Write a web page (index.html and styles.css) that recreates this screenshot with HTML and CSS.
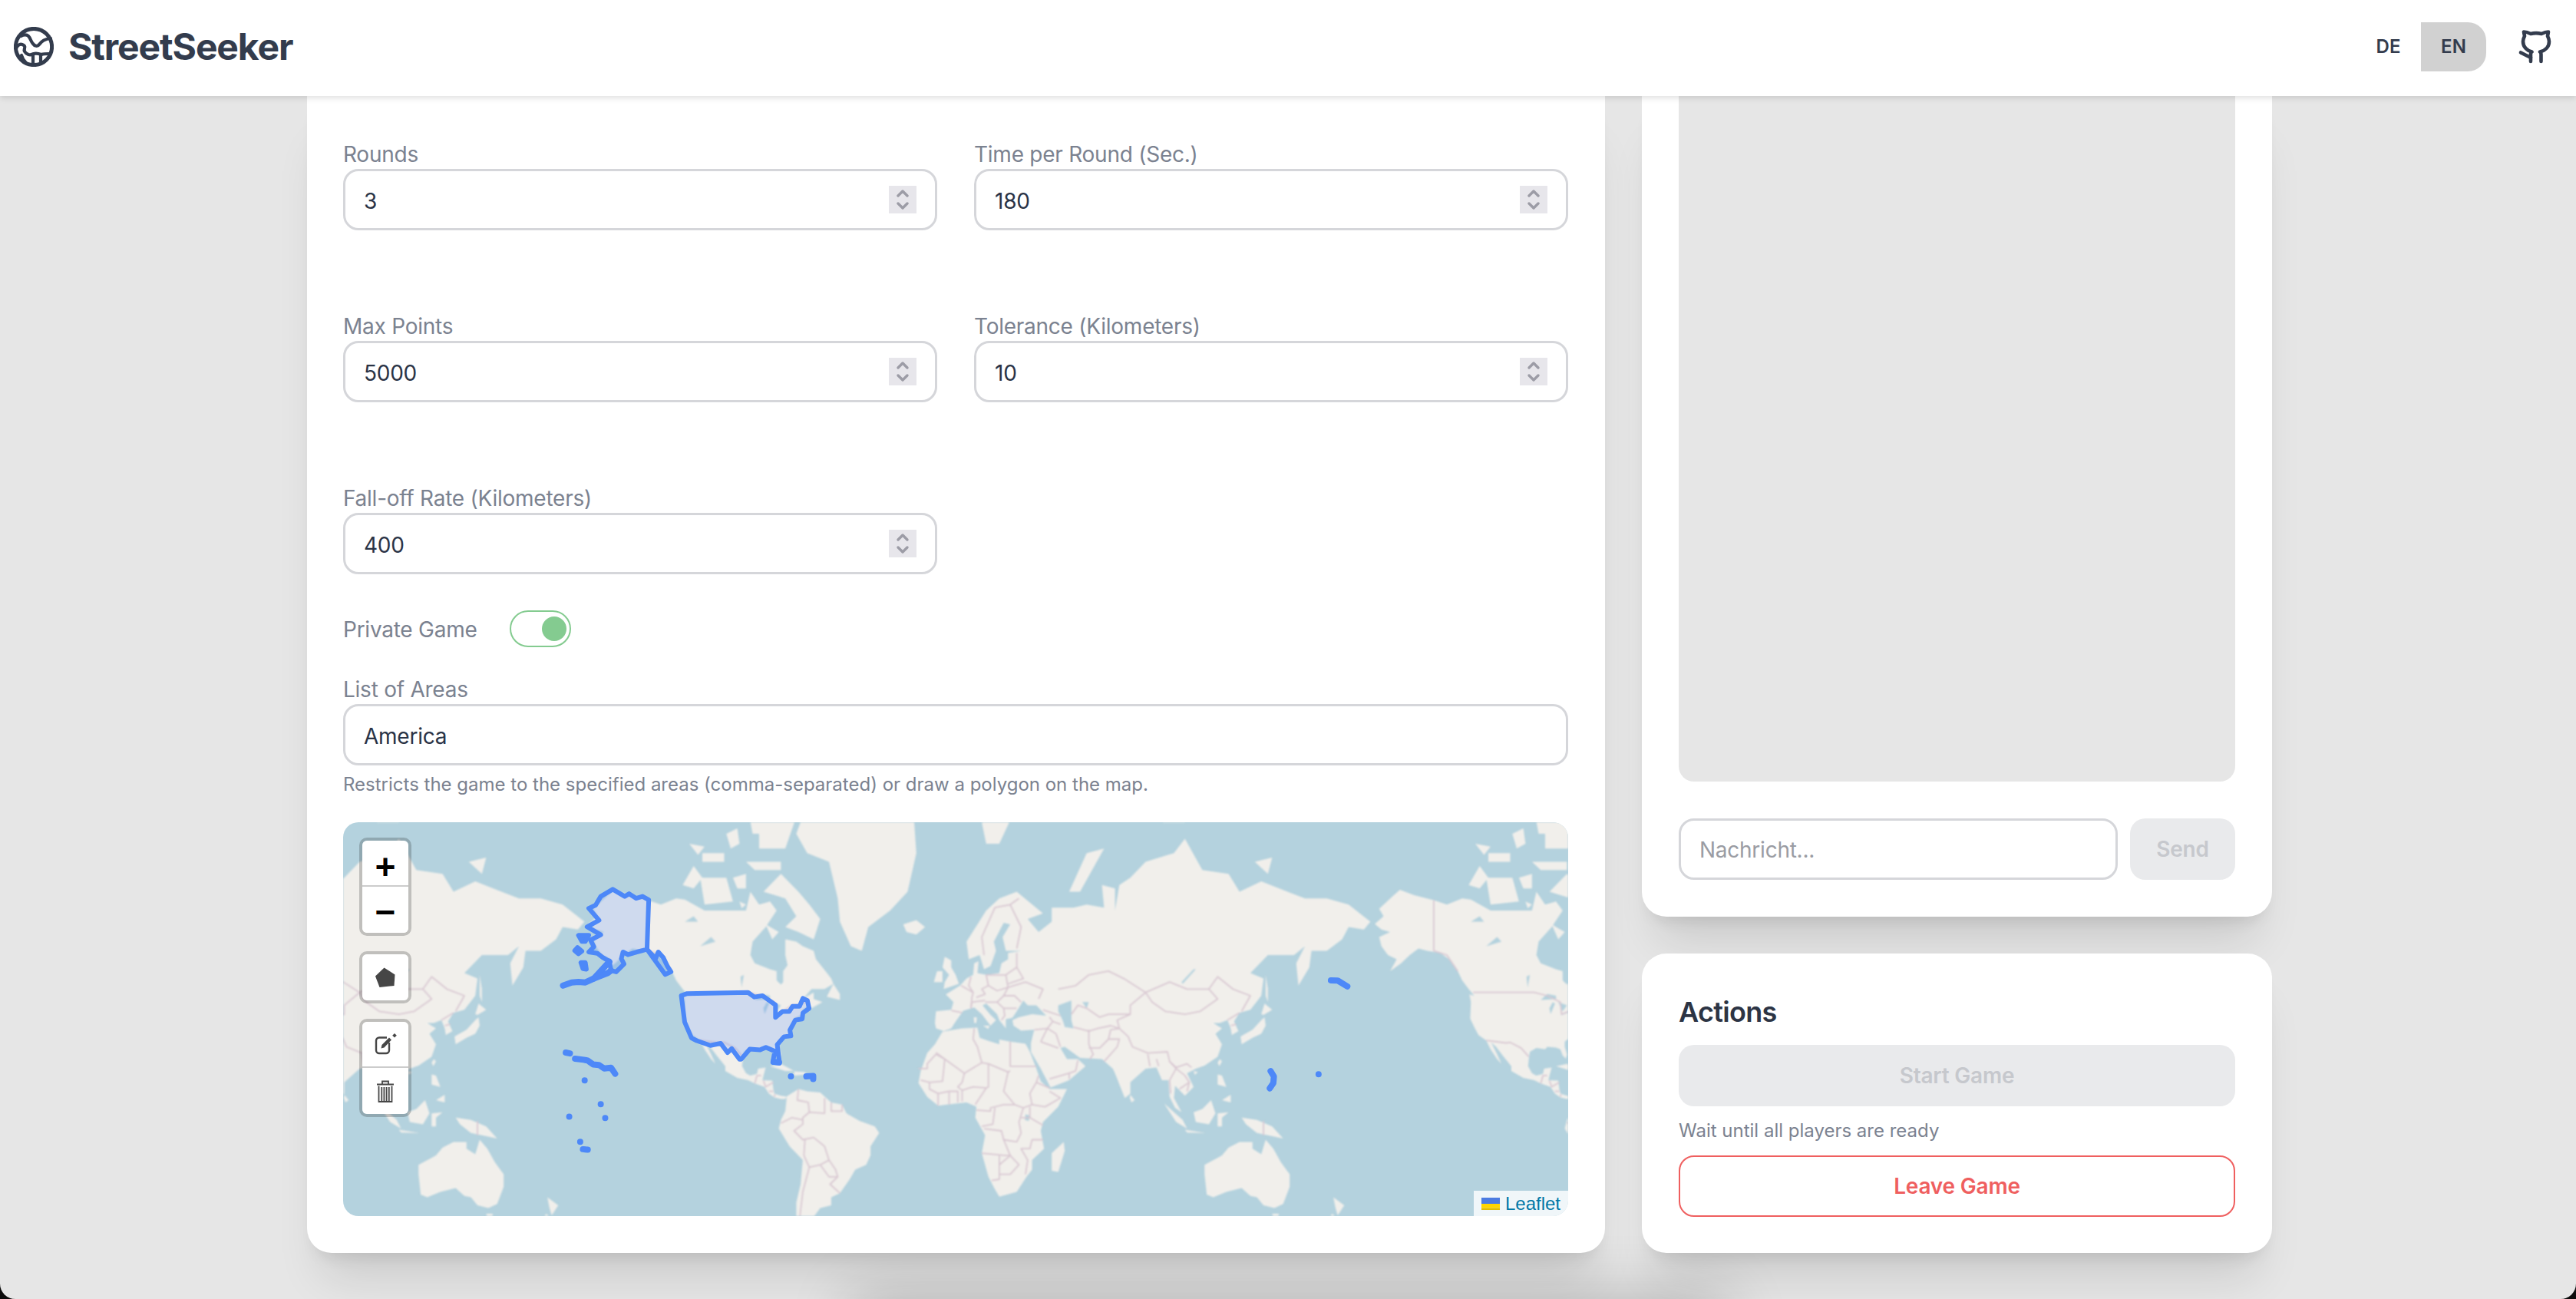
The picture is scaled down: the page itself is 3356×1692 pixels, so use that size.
FILE: index.html
```html
<!DOCTYPE html>
<html lang="en">
<head>
    <meta charset="UTF-8">
    <meta name="viewport" content="width=device-width, initial-scale=1.0">
    <title>StreetSeeker</title>
    <link rel="stylesheet" href="styles.css">
</head>
<body>
    <div class="window">
        <div class="bottom-glow"></div>

        <header class="topbar">
            <a class="brand" href="#">
                <svg class="brand-icon" viewBox="0 0 52 52" fill="none" stroke="currentColor" stroke-width="4.200" stroke-linecap="round" stroke-linejoin="round">
                    <circle cx="26" cy="26" r="23.600" stroke-width="5"/>
                    <path d="M9 12c4-2 8-2 10 0 3 3 3 7 6 10 2 3 6 4 8 1 2-3 6-7 15-8"/>
                    <path d="M3 28c2-4 5-6 8-5 3 1 4 3 3 5-1 3 0 6 5 8 3 1 5 0 7-1 3-1 7 0 10 1 3-1 6-1 11-1"/>
                    <path d="M25 48V36M35 48V37M10 37c1 4 3 7 6 10"/>
                </svg>
                <span class="brand-name">StreetSeeker</span>
            </a>
            <div class="topbar-right">
                <div class="lang-switch">
                    <button class="lang-btn">DE</button>
                    <button class="lang-btn lang-active">EN</button>
                </div>
                <a class="github-link" href="#">
                    <svg viewBox="0 0 40 43" fill="none" stroke="currentColor" stroke-width="4.600" stroke-linecap="round" stroke-linejoin="round">
                        <path d="M15 41V32c0-2 .5-3 1.500-3.500C10 27 5 22 5 15c0-3 1-5 2-7L6 2.500c3 0 6 1 9 2.500 4-1 10-1 14 0 3-1.500 6-2.500 9-2.500L37 8c1 2 2 4 2 7 0 7-5 12-12 13.500 1 .5 1.500 1.500 1.500 3.500V41"/>
                        <path d="M2 29.500L15 36"/>
                    </svg>
                </a>
            </div>
        </header>

        <main class="content">
            <section class="card settings-card">
                <div class="number-grid">
                    <div class="field">
                        <label class="field-label">Rounds</label>
                        <div class="input-box">
                            <input class="text-input" type="text" value="3">
                            <span class="spinner"><svg viewBox="0 0 36 36" fill="none" stroke="#9c9ca6" stroke-width="3.400" stroke-linecap="round" stroke-linejoin="round"><path d="M12 13l6-6 6 6M12 23l6 6 6-6"/></svg></span>
                        </div>
                    </div>
                    <div class="field">
                        <label class="field-label">Time per Round (Sec.)</label>
                        <div class="input-box">
                            <input class="text-input" type="text" value="180">
                            <span class="spinner"><svg viewBox="0 0 36 36" fill="none" stroke="#9c9ca6" stroke-width="3.400" stroke-linecap="round" stroke-linejoin="round"><path d="M12 13l6-6 6 6M12 23l6 6 6-6"/></svg></span>
                        </div>
                    </div>
                    <div class="field">
                        <label class="field-label">Max Points</label>
                        <div class="input-box">
                            <input class="text-input" type="text" value="5000">
                            <span class="spinner"><svg viewBox="0 0 36 36" fill="none" stroke="#9c9ca6" stroke-width="3.400" stroke-linecap="round" stroke-linejoin="round"><path d="M12 13l6-6 6 6M12 23l6 6 6-6"/></svg></span>
                        </div>
                    </div>
                    <div class="field">
                        <label class="field-label">Tolerance (Kilometers)</label>
                        <div class="input-box">
                            <input class="text-input" type="text" value="10">
                            <span class="spinner"><svg viewBox="0 0 36 36" fill="none" stroke="#9c9ca6" stroke-width="3.400" stroke-linecap="round" stroke-linejoin="round"><path d="M12 13l6-6 6 6M12 23l6 6 6-6"/></svg></span>
                        </div>
                    </div>
                    <div class="field">
                        <label class="field-label">Fall-off Rate (Kilometers)</label>
                        <div class="input-box">
                            <input class="text-input" type="text" value="400">
                            <span class="spinner"><svg viewBox="0 0 36 36" fill="none" stroke="#9c9ca6" stroke-width="3.400" stroke-linecap="round" stroke-linejoin="round"><path d="M12 13l6-6 6 6M12 23l6 6 6-6"/></svg></span>
                        </div>
                    </div>
                </div>

                <div class="toggle-row">
                    <span class="field-label">Private Game</span>
                    <span class="toggle"><span class="toggle-knob"></span></span>
                </div>

                <div class="field areas-field">
                    <label class="field-label">List of Areas</label>
                    <div class="input-box">
                        <input class="text-input" type="text" value="America">
                    </div>
                    <p class="help-text">Restricts the game to the specified areas (comma-separated) or draw a polygon on the map.</p>
                </div>

                <div class="map">
                    <svg id="mapLayer" class="map-tiles" viewBox="0 0 1596 513"></svg>

                    <svg class="map-overlay" viewBox="0 0 1596 513">
                        <g transform="translate(-17 -12) scale(.4464 .3448)">
                            <path class="area" d="M825 288L860 315 873 305 893 322 912 315 930 328 925 515 895 525 870 535 855 525 850 550 858 570 835 600 820 595 815 560 795 545 780 530 755 525 770 505 760 480 790 460 770 445 750 430 785 405 755 360 775 348 790 315Z"/>
                            <path class="area" d="M925 515L950 550 958 525 972 545 985 580 995 600 978 610 950 560Z"/>
                            <path class="area" d="M1025 690L1042 682 1220 678 1238 695 1262 690 1300 725 1300 772 1320 750 1340 750 1350 730 1370 730 1380 700 1393 708 1398 738 1380 755 1378 778 1358 782 1342 820 1345 842 1325 845 1305 875 1312 945 1292 942 1298 900 1272 885 1255 895 1225 892 1200 930 1195 930 1172 890 1160 905 1140 870 1110 878 1070 860 1055 850 1035 790Z"/>
                            <path class="area-line" d="M815 562L770 625 745 640 725 638 705 640 680 652"/>
                            <path class="area-line" d="M770 625L810 605 820 595"/>
                            <path class="area-solid" d="M725 462L755 462 745 485 735 485Z"/>
                            <path class="area-solid" d="M722 508L735 522 725 532 714 520Z"/>
                            <path class="area-solid" d="M732 565L745 565 748 590 738 588Z"/>
                            <path class="area-line" d="M688 905L700 908M715 928L740 932 752 935 768 950 785 952 800 965 820 962 832 985"/>
                            <path class="area-line" d="M743 1010v.1M790 1100v.1M698 1147v.1M803 1152v.1M730 1242v.1M738 1270L752 1272M1345 995v.1M1390 995L1410 993 1410 1005"/>
                            <path class="area-line" d="M1295 940L1310 942"/>
                        </g>
                        <g transform="translate(1053 -12) scale(.3571 .3448)">
                            <path class="area-line" d="M655 632L680 633 715 655M435 975L447 995 445 1020 432 1040M610 987v.1"/>
                        </g>
                    </svg>

                    <div class="map-controls">
                        <div class="map-control">
                            <a class="map-btn map-zoom">+</a>
                            <a class="map-btn map-zoom">−</a>
                        </div>
                        <div class="map-control">
                            <a class="map-btn">
                                <svg class="map-icon" viewBox="0 0 30 30"><path fill="#464646" d="M13.500 2.500L27.500 11.500 26.500 26 7.500 28 2 13.500Z"/></svg>
                            </a>
                        </div>
                        <div class="map-control">
                            <a class="map-btn">
                                <svg class="map-icon" viewBox="0 0 30 30" fill="none" stroke="#464646" stroke-width="2.400">
                                    <path d="M17 6.500H7a4 4 0 0 0-4 4V23a4 4 0 0 0 4 4h9a4 4 0 0 0 4-4V13"/>
                                    <path d="M9.500 20.500l1-4.500L20 6.500l3 3-9.500 10z" fill="#464646" stroke="none"/>
                                    <path d="M27 1l2.800 2.800L27 6.600 24.200 3.800z" fill="#464646" stroke="none"/>
                                </svg>
                            </a>
                            <a class="map-btn">
                                <svg class="map-icon" viewBox="0 0 30 30" fill="none" stroke="#464646" stroke-width="1.800">
                                    <path d="M11 6V2.500h8V6M4 6.500h22M6.500 8.500V29h17V8.500M10.300 10v18M13.400 10v18M16.600 10v18M19.800 10v18"/>
                                </svg>
                            </a>
                        </div>
                    </div>

                    <div class="map-credit">
                        <svg class="flag" viewBox="0 0 24 16"><rect width="24" height="8" fill="#4c7be1"/><rect y="8" width="24" height="5.500" fill="#ffd500"/><rect y="13.500" width="24" height="2.500" fill="#e0bc00"/></svg>
                        <a class="credit-link" href="#">Leaflet</a>
                    </div>
                </div>
            </section>

            <div class="side-column">
                <section class="card chat-card">
                    <div class="chat-box"></div>
                    <div class="chat-form">
                        <input class="chat-input" type="text" placeholder="Nachricht...">
                        <button class="btn btn-disabled send-btn">Send</button>
                    </div>
                </section>
                <section class="card actions-card">
                    <h2 class="actions-title">Actions</h2>
                    <button class="btn btn-disabled">Start Game</button>
                    <p class="hint">Wait until all players are ready</p>
                    <button class="btn btn-danger">Leave Game</button>
                </section>
            </div>
        </main>
    </div>

    <script src="map.js"></script>
</body>
</html>
```

FILE: styles.css
```css
* {
    box-sizing: border-box;
}
html, body {
    margin: 0;
    background-color: #0c0c0c;
}
body {
    font-family: Inter, "Noto Sans", sans-serif;
    color: #333c4d;
}
.window {
    position: relative;
    display: flex;
    flex-direction: column;
    height: 1692px;
    overflow: hidden;
    background-color: #e6e6e6;
    border-radius: 0 0 20px 20px;
}
.bottom-glow {
    position: absolute;
    left: 1130px;
    top: 1710px;
    width: 1100px;
    height: 80px;
    box-shadow: 0 0 80px 20px rgba(0, 0, 0, 0.22);
}

/* top bar */
.topbar {
    position: relative;
    z-index: 10;
    display: flex;
    justify-content: space-between;
    align-items: center;
    flex: none;
    height: 125px;
    padding: 0 34px 4px 18px;
    background-color: #FFF;
    box-shadow: 0 2px 8px rgba(0, 0, 0, 0.14);
}
.brand {
    display: flex;
    align-items: center;
    gap: 19px;
    color: #333c4d;
    text-decoration: none;
}
.brand-icon {
    display: block;
    width: 52px;
    height: 52px;
}
.brand-name {
    font-size: 48px;
    font-weight: 700;
    line-height: 52px;
    letter-spacing: -1.1px;
}
.topbar-right {
    display: flex;
    align-items: center;
    gap: 43px;
}
.lang-switch {
    display: flex;
}
.lang-btn {
    width: 85px;
    height: 64px;
    padding: 0;
    font-family: inherit;
    font-size: 24px;
    font-weight: 600;
    color: #333c4d;
    background: none;
    border: none;
    border-radius: 0 24px 24px 0;
}
.lang-active {
    background-color: #d1d1d1;
}
.github-link {
    display: block;
    width: 40px;
    height: 43px;
    color: #333c4d;
}
.github-link svg {
    display: block;
    width: 100%;
    height: 100%;
    overflow: visible;
}

/* main columns */
.content {
    position: relative;
    z-index: 1;
    display: grid;
    grid-template-columns: 1691px 821px;
    gap: 48px;
    flex: 1;
    min-height: 0;
    padding: 0 0 60px 400px;
}
.card {
    background-color: #FFF;
    border-radius: 32px;
    box-shadow: 0 50px 60px -20px rgba(0, 0, 0, 0.12), 0 16px 20px -12px rgba(0, 0, 0, 0.1);
}
.settings-card {
    padding: 55px 48px 47px 47px;
    border-radius: 0 0 32px 32px;
}
.side-column {
    display: flex;
    flex-direction: column;
    gap: 48px;
    min-height: 0;
}

/* form */
.number-grid {
    display: grid;
    grid-template-columns: 1fr 1fr;
    gap: 104px 48px;
}
.field-label {
    display: block;
    height: 40px;
    font-size: 28px;
    line-height: 43px;
    letter-spacing: -0.25px;
    color: #7b8290;
}
.input-box {
    display: flex;
    align-items: center;
    height: 80px;
    padding: 0 24px 0 24px;
    background-color: #FFF;
    border: 3px solid #d5d6da;
    border-radius: 20px;
}
.text-input {
    flex: 1;
    min-width: 0;
    padding: 3px 0 0;
    font-family: inherit;
    font-size: 28px;
    letter-spacing: -0.25px;
    color: #2a3346;
    background: none;
    border: none;
    outline: none;
}
.spinner {
    display: block;
    flex: none;
    width: 36px;
    height: 36px;
    background-color: #e7e6eb;
}
.spinner svg {
    display: block;
}
.toggle-row {
    display: flex;
    align-items: center;
    gap: 42px;
    height: 48px;
    margin-top: 47px;
}
.toggle {
    display: block;
    width: 80px;
    height: 48px;
    padding: 6px 6px 6px 40px;
    border: 2px solid #84cb90;
    border-radius: 24px;
}
.toggle-knob {
    display: block;
    width: 32px;
    height: 32px;
    background-color: #84cb90;
    border-radius: 50%;
}
.areas-field {
    margin-top: 34px;
}
.help-text {
    margin: 8px 0 0;
    font-size: 24px;
    line-height: 33px;
    color: #7b8290;
}

/* map */
.map {
    position: relative;
    height: 513px;
    margin-top: 33px;
    overflow: hidden;
    background-color: #b4d2de;
    border-radius: 20px;
}
.map-tiles, .map-overlay {
    position: absolute;
    inset: 0;
    display: block;
    width: 100%;
    height: 100%;
}
.map-tiles {
    filter: blur(0.8px);
}
.land {
    fill: #f1efeb;
}
.lake {
    fill: #b4d2de;
}
.border {
    fill: none;
    stroke: #d9c8d2;
    stroke-width: 1.800;
    stroke-linejoin: round;
}
.area, .area-line, .area-solid {
    stroke: #4d88f8;
    stroke-width: 6;
    stroke-linejoin: round;
    stroke-linecap: round;
    vector-effect: non-scaling-stroke;
}
.area {
    fill: rgba(77, 136, 248, 0.2);
}
.area-line {
    fill: none;
    stroke-width: 8;
}
.area-solid {
    fill: #4d88f8;
}
.map-controls {
    position: absolute;
    left: 21px;
    top: 20px;
    display: flex;
    flex-direction: column;
    gap: 20px;
}
.map-control {
    width: 68px;
    background-clip: padding-box;
    border: 4px solid rgba(0, 0, 0, 0.2);
    border-radius: 10px;
}
.map-btn {
    display: flex;
    justify-content: center;
    align-items: center;
    height: 60px;
    background-color: #FFF;
    border-bottom: 2px solid #ccc;
}
.map-btn:first-child {
    border-radius: 6px 6px 0 0;
}
.map-btn:last-child {
    border-bottom: none;
    border-radius: 0 0 6px 6px;
}
.map-btn:only-child {
    border-radius: 6px;
}
.map-zoom {
    padding-top: 14px;
    font-family: "Liberation Mono", monospace;
    font-size: 46px;
    font-weight: 700;
    line-height: 46px;
    color: #000;
}
.map-zoom:first-child {
    padding-top: 18px;
}
.map-icon {
    display: block;
    width: 30px;
    height: 30px;
}
.map-credit {
    position: absolute;
    right: 0;
    bottom: 0;
    display: flex;
    align-items: center;
    gap: 7px;
    height: 33px;
    padding: 0 10px;
    background-color: rgba(255, 255, 255, 0.8);
}
.flag {
    display: block;
    width: 24px;
    height: 16px;
}
.credit-link {
    font-family: "Liberation Sans", Arial, sans-serif;
    font-size: 24px;
    color: #0078A8;
    text-decoration: none;
}

/* chat + actions */
.chat-card {
    display: flex;
    flex-direction: column;
    flex: 1;
    min-height: 0;
    padding: 0 48px 48px;
    border-radius: 0 0 32px 32px;
}
.chat-box {
    flex: 1;
    background-color: #e6e6e6;
    border-radius: 0 0 20px 20px;
}
.chat-form {
    display: flex;
    gap: 16px;
    margin-top: 48px;
}
.chat-input {
    flex: 1;
    min-width: 0;
    height: 80px;
    padding: 2px 24px 0;
    font-family: inherit;
    font-size: 28px;
    letter-spacing: -0.25px;
    background-color: #FFF;
    border: 3px solid #d5d6da;
    border-radius: 20px;
    outline: none;
}
.chat-input::placeholder {
    color: #9a9ca3;
}
.btn {
    display: block;
    width: 100%;
    height: 80px;
    padding: 0;
    font-family: inherit;
    font-size: 28px;
    font-weight: 600;
    letter-spacing: -0.2px;
    border-radius: 20px;
}
.btn-disabled {
    color: #c6c8cd;
    background-color: #e9eaec;
    border: none;
}
.send-btn {
    flex: none;
    width: 137px;
}
.btn-danger {
    color: #ef5f5f;
    background-color: #FFF;
    border: 2px solid #ef5f5f;
}
.actions-card {
    flex: none;
    padding: 48px 48px 47px;
}
.actions-title {
    margin: 0 0 15px;
    font-size: 36px;
    font-weight: 600;
    line-height: 56px;
    letter-spacing: -0.7px;
    color: #2c3444;
}
.hint {
    margin: 16px 0;
    font-size: 24px;
    line-height: 32px;
    color: #7b8290;
}
```

FILE: map.js
```js
// rough world outlines, [lon, lat]
const LAND = [
    // north america
    [[-168,65.6],[-164,67],[-166,68.3],[-160,70.3],[-156.5,71.3],[-150,70.5],[-141,69.7],[-135,69],[-128,70],[-124,69.8],[-115,68],[-108,68],[-100,68],[-96,68],[-94,71],[-90,69],[-85,69.5],[-82,68],[-87,65],[-93,62],[-94,59],[-92,57],[-85,55.5],[-82,55],[-82,52.5],[-80,51.3],[-79,52],[-79,55],[-77,56.5],[-78,59],[-78,62.5],[-73,62],[-70,61],[-65,60],[-64,58],[-61,56],[-57,53],[-56,51.5],[-60,50],[-66,50],[-70,47],[-65,49],[-65,47],[-61,46],[-66,44],[-67,45],[-70,43.5],[-70,42],[-74,40.5],[-75.5,38],[-76,35.5],[-78,34],[-81,32],[-81,30],[-80,27],[-80.5,25.2],[-82,26.5],[-83,29],[-85,29.7],[-89,30],[-90,29],[-94,29.5],[-97,28],[-97.5,25],[-97.8,22],[-96,19],[-94,18],[-91,18.7],[-90.5,21],[-87,21.5],[-88,18],[-88.5,16],[-84,15.8],[-83.5,12],[-83,10],[-80,9],[-77.5,8.7],[-78,7.5],[-80,7.5],[-83,8.2],[-85.5,10],[-87.5,13],[-92,14.5],[-95,16],[-100,17],[-105.5,20],[-105.5,22],[-109,26],[-112.5,30],[-114.7,31.7],[-112,27],[-110,23],[-112,25],[-115,29],[-117,32.5],[-120.5,34.5],[-122.5,37.5],[-124.3,40.5],[-124,46],[-124.7,48.4],[-122.5,48],[-125,50],[-128,52.5],[-130,55],[-134,58],[-138,59.5],[-144,60],[-148,60.5],[-152,59],[-156,57],[-161,55],[-158,58],[-162,59],[-165,61],[-166,63],[-161,64],[-165,64.5]],
    // greenland + arctic islands
    [[-73,78],[-68,80.5],[-60,82],[-32,83.5],[-20,81.5],[-18,76],[-22,71],[-30,68],[-40,65],[-43,60],[-48,61],[-53,66],[-54,70],[-58,75],[-68,76]],
    [[-80,73.5],[-72,71],[-67,69],[-62,66.5],[-65,62.5],[-72,64],[-78,65],[-73,67],[-78,70],[-88,71]],
    [[-117,73],[-105,73],[-102,69.5],[-115,69]],
    [[-125,72],[-120,74.5],[-116,73],[-120,71.5]],
    [[-90,76.5],[-78,76.5],[-72,80],[-62,82.5],[-90,82]],
    [[-96,75],[-80,75],[-80,74],[-92,74]],
    [[-116,76],[-106,76],[-106,75],[-116,75]],
    [[-95,80],[-87,80],[-87,78],[-93,78]],
    [[-102,73],[-96,73.5],[-96,71.5],[-100,71.5]],
    [[-87,65.5],[-81,64],[-84,62.5]],
    [[-122,77],[-115,76.7],[-118,75.8]],
    [[-105,78],[-100,78.5],[-99,77],[-103,76.5]],
    [[-99,69.5],[-96,69],[-98,68.4]],
    [[-59,47.7],[-53,46.7],[-53,48.5],[-56,51.5]],
    [[-85,22],[-80,23],[-74,20],[-78,20]],
    [[-74,19.8],[-69,19.5],[-68.5,18.5],[-74,18]],
    [[-24,65.5],[-18,66.3],[-14,65],[-18,63.5],[-22.5,64]],
    // south america
    [[-77.5,8.7],[-72,12],[-68,11],[-62,10.5],[-57,6],[-52,5],[-50,1],[-44,-2.5],[-37,-5],[-35,-8],[-39,-14],[-39,-18],[-41,-22],[-46,-24],[-48.5,-28],[-53,-33.5],[-57,-35],[-57,-38],[-62,-39],[-65,-42],[-66,-46],[-69,-51],[-68,-54.5],[-72,-53.5],[-75,-50],[-73,-42],[-73,-37],[-71,-30],[-70,-20],[-76,-14],[-81,-6],[-80,-2],[-78,2],[-77.5,7]],
    // africa
    [[-6,35.8],[3,37],[10,37.3],[11,33.5],[15,32.3],[20,31],[20,32.8],[25,32],[32,31.2],[34,28],[37,21],[39,15.5],[43,12],[51,12],[47,4],[40,-3],[39,-7],[40.5,-15],[35,-20],[35,-24],[32.5,-27],[28,-33],[20,-34.8],[18,-32],[15,-27],[12,-17],[13.5,-9],[9,-1],[9.5,4],[5,6],[-4,5],[-8,4.5],[-13,8.5],[-17,14.7],[-16,20],[-13,27.5],[-9.5,31]],
    [[49.5,-12],[50,-16],[47,-25],[44,-24.5],[44,-17]],
    // eurasia
    [[-9,37],[-9.5,39],[-9,43],[-2,43.5],[-1,46],[-4.5,48.4],[2,51],[5,53],[8,54],[8.5,57],[10.5,57.5],[10,54.5],[14,54],[20,54.5],[21,57],[24,58],[24,59.5],[30,60],[23,60],[21.5,63],[25,65.5],[22,65.8],[17.5,62],[18.5,60],[16,56.3],[13,55.5],[11,59],[6,58],[5,62],[14,68],[20,70],[28,71],[40,67.5],[33,66.5],[38,64],[44,66],[44,68.5],[54,68.5],[60,69],[68,68.5],[67,72],[73,71.5],[73,68],[75,72],[80,73],[87,75],[100,76],[105,77.5],[113,74],[125,73.5],[130,71],[140,72.5],[152,71],[160,70],[170,70],[180,69],[190,66],[187,64.5],[180,65],[177,62.5],[170,60],[163,60],[162,56],[157,51],[156,57],[160,61],[155,59],[143,59],[135,54.5],[141,53],[140,48],[135,43.5],[130,42.5],[127.5,39.5],[129.5,36],[126.5,34.5],[126,37],[124.5,40],[121,39],[118,39],[122,37],[119,35],[122,31],[120,26],[114,22.3],[110,21],[106,19],[109,13],[105,9],[100.5,13.5],[100,8],[103.5,1.5],[100.5,3.5],[98,8.5],[97.5,16],[94.5,16],[92,21.5],[87,21],[80,15],[80,10],[77.5,8],[73,19],[72,21],[67,25],[57,25.5],[50,30],[48,29.5],[51,25],[56,25],[59.5,22],[52,16],[43.5,12.7],[39,21],[34.5,28],[34.5,31.5],[36,36.5],[30,36.2],[26.5,38],[26,40],[29,41],[35,42],[41.5,41.5],[37,45],[33,45],[31,46.5],[28,43],[26,40.8],[23,40.3],[23,37],[20,40],[19,42],[14,45.5],[12.3,45],[16,41.8],[18.5,40],[16,38],[12,42],[8.5,44.3],[3.5,43.2],[0,39.5],[-2,37],[-5.5,36]],
    // australia + pacific
    [[114,-22],[122,-18],[125,-14.5],[130,-12],[136,-12],[136,-15],[140,-17.5],[142,-11],[145.5,-15],[149,-21],[153,-26],[153,-31],[150,-37.5],[146,-39],[141,-38],[138,-35],[135,-34.5],[131,-31.5],[124,-33],[118,-35],[115,-34],[114,-26]],
    [[145,-41],[148,-41],[147.5,-43.5],[146,-43.5]],
    [[173,-35],[178,-38],[175,-41.5],[174,-39]],
    [[172.5,-41],[174,-42],[170,-46.5],[167,-46]],
    [[131,-1],[138,-2],[145,-5],[150,-10.5],[143,-9],[138,-8],[133,-4]],
    [[109,1.5],[113,3],[117,7],[119,1],[116,-4],[110,-3]],
    [[95.5,5.5],[104,-2],[106,-6],[101,-3]],
    [[105,-6.5],[114.5,-8],[106,-7.8]],
    [[120,1],[125,1.5],[122,-1],[122,-5],[120,-5]],
    [[120,18.5],[122,18],[124,13],[120,14]],
    [[122,7],[126,9.5],[126,6]],
    [[130.5,34],[136,36.5],[140,40],[141.5,41],[142,38],[140,35],[136,33.5],[131,31]],
    [[140,42],[141.5,45.5],[145,43.5],[141,41.8]],
    [[142,54],[143,50],[143,46],[142,48]],
    [[121,25],[122,24],[120.8,22],[120,23.5]],
    [[80,9.5],[82,7],[80.5,6],[79.8,8]],
    [[109,20],[111,19.5],[109.5,18.3]],
    // europe islands + siberian arctic
    [[-5.5,50],[1.5,51.5],[0,54],[-2,56],[-2,57.7],[-5,58.6],[-6,56],[-3,54],[-5,52]],
    [[-10,52],[-6,52],[-6,55],[-8.5,55]],
    [[12,79],[27,80],[20,77],[14,77]],
    [[52,71],[57,71],[68,76.5],[60,76]],
    [[95,79],[105,79],[100,81]],
    [[137,75],[145,75.5],[143,73.5]],
    [[12.5,38],[15.5,38],[15,36.8]],
    [[8.3,41],[9.7,41],[9.5,39],[8.5,39]]
];

const LAKES = [
    [[47,45],[53,46.5],[53,40],[54,37],[50,37.5],[49,40],[47,43]],
    [[58,46],[61,46],[60,44]],
    [[-92,46.7],[-85,47],[-85,48],[-89,48.5]],
    [[-87.5,42],[-85.5,45.5],[-86.5,46],[-88,44]],
    [[-84,46],[-80,45],[-82,43]],
    [[-83,41.6],[-79,42.7],[-79.5,43.2],[-76.5,43.5],[-79,43.4]],
    [[-124,66],[-118,66],[-120,67]],
    [[-117,61],[-110,62],[-112,63]],
    [[-98,50.5],[-97,54],[-98.5,53.5]],
    [[104,51.5],[110,55.5],[109,55.5],[103.5,52]],
    [[32,0.5],[34,0],[33.5,-2.5],[31.7,-2]]
];

const BORDERS = [
    [[-123,49],[-95,49],[-89,48],[-83,46],[-82.5,42],[-79,43],[-75,45],[-71,45],[-67.5,47],[-67,45]],
    [[-141,69.7],[-141,60],[-135,59],[-130,55]],
    [[-117,32.5],[-108,31.5],[-106,31.7],[-101,29.5],[-97.5,26]],
    [[-92,14.5],[-91,18],[-89,18]],
    [[-88,15.8],[-87,13]],
    [[-83.5,15],[-87,13]],
    [[-83.5,11],[-85.5,11]],
    [[-83,8.5],[-82.8,9.7]],
    [[-72,12],[-72.5,7],[-67.5,6],[-67,1.5]],
    [[-60,8],[-60,1],[-67,1.5],[-70,-1],[-70,-4],[-74,-7],[-70,-11],[-65,-10],[-60,-14],[-58,-20],[-55,-24],[-54,-27],[-57.5,-30],[-53,-33.5]],
    [[-80,-3.5],[-75,-1],[-70,-2]],
    [[-69.5,-18],[-67,-23],[-70,-33],[-72,-46],[-72,-52]],
    [[-69.5,-18],[-69,-11]],
    [[-67,-23],[-62,-22],[-58,-20]],
    [[-62,-22],[-58,-27],[-54,-27]],
    [[-57,6],[-57,2],[-52,2],[-52,5]],
    [[-9,27.7],[-5,25],[4,19],[12,23.5],[10,30],[8,33],[8.5,37]],
    [[25,32],[25,22],[37,22]],
    [[12,23.5],[15,23],[24,19.5],[25,20]],
    [[24,19.5],[22,11],[27,5],[31,3.5],[35,5],[34,10],[37,15],[38,18]],
    [[-17,21],[-13,21],[-13,23],[-9,27],[-5,25],[-6,15.5],[-12,15],[-16,16]],
    [[4,19],[3,15],[1,13],[3,11.5],[3,6.5]],
    [[15,23],[15,13],[14,12.5],[8,13],[3,11.5]],
    [[14,12.5],[9,5]],
    [[9.5,2.5],[16,2],[16,3.5],[22,5],[27,5]],
    [[12,-5],[17,-4],[18,3.5]],
    [[31,3.5],[29,-3],[30,-8],[28,-12],[22,-11],[21,-7],[13,-6]],
    [[12,-17],[23,-18],[25,-18],[22,-11]],
    [[20,-18],[20,-28],[16.5,-28.5]],
    [[20,-22],[25,-18],[29,-22],[25,-26],[20,-26]],
    [[40,-11],[35,-11],[34,-15],[30,-15],[33,-20],[32,-26]],
    [[40,-4.5],[34,-1],[30,-1]],
    [[34,-1],[34,4]],
    [[35,5],[41,4],[48,8],[43,11]],
    [[37,15],[43,12.5]],
    [[-8,4.5],[-8,10],[-12,12],[-12,15]],
    [[-8,10],[-3,11],[1,11],[1,6]],
    [[-3,5],[-3,11]],
    [[-2,43.3],[3,42.5]],
    [[2.5,51],[8,49],[7.5,47.5],[7,44]],
    [[7,53.5],[6,51],[8,49]],
    [[14,54],[15,51],[12,50],[13.5,48.5],[9.5,47.5]],
    [[14,54],[23,54],[24,50.5],[19,49.5],[15,51]],
    [[24,50.5],[32,52],[40,50],[38,47]],
    [[30,46],[27,48],[22,48],[24,50.5]],
    [[23,54],[28,56],[31,53],[24,51.5]],
    [[28,56],[28,59.5]],
    [[25,69],[30,65],[28,60.5]],
    [[13,59],[12,63],[18,68.5],[25,69],[29,70]],
    [[13.5,46],[19,46],[22,44],[28,44]],
    [[22,44],[22.5,41.5],[21,40]],
    [[22,48],[19,46]],
    [[7,44],[7.5,46],[13.5,46.5]],
    [[36,36.5],[42,37],[44.5,39.5],[43,41]],
    [[40,43.5],[48,41.5]],
    [[44.5,39.5],[48,38.5]],
    [[46,35],[48,30]],
    [[61,36.5],[61,31],[63,27],[61.5,25]],
    [[39,32],[47,29.5]],
    [[39,32],[42,37],[46,35]],
    [[43,16.5],[52,19],[55,20],[56,24.5]],
    [[52,16.5],[52,19]],
    [[47,50],[55,51],[61,54],[70,55],[77,53],[87,49]],
    [[53,42],[56,45],[60,44],[66,41],[70,42],[80,42],[80,45],[87,49]],
    [[54,37.5],[61,36],[65,37],[71,38],[75,37]],
    [[61,29.5],[66,29.5],[70,33],[71,36.5],[75,37]],
    [[75,37],[74,40],[80,42]],
    [[70,33],[75,33],[74,30],[70,26],[68,24]],
    [[75,37],[79,34],[81,30],[88,27.5],[97,28],[98,24],[101,21.5],[106,23],[108,21.5]],
    [[87,49],[98,52],[106,50],[116,50],[120,47],[112,43],[105,42],[96,43],[90,46],[87,49]],
    [[116,50],[120,53.5],[127,50],[135,48],[131,43]],
    [[124.5,40],[130,42.5]],
    [[126,38],[128.5,38.5]],
    [[88,27],[89,22]],
    [[92,25],[93,22]],
    [[98,24],[101,21],[98,16],[98.5,10]],
    [[101,21],[105,18],[107,15],[106,11]],
    [[107,15],[102.5,12]],
    [[141,-2.5],[141,-9]]
];

const WORLD = 1024;
const ORIGIN_X = 798;
const EQUATOR_Y = 382;

function project([lon, lat]) {
    const x = ORIGIN_X + lon / 360 * WORLD;
    const y = EQUATOR_Y - WORLD / (2 * Math.PI) * Math.log(Math.tan(Math.PI / 4 + lat * Math.PI / 360));
    return [x.toFixed(1), y.toFixed(1)];
}

function toPath(points, closed) {
    const d = points.map(p => project(p).join(' ')).join('L');
    return 'M' + d + (closed ? 'Z' : '');
}

function addPath(parent, className, d) {
    const path = document.createElementNS('http://www.w3.org/2000/svg', 'path');
    path.setAttribute('class', className);
    path.setAttribute('d', d);
    parent.appendChild(path);
}

function drawMap() {
    const layer = document.getElementById('mapLayer');
    // the world repeats sideways
    [-WORLD, 0, WORLD].forEach(offset => {
        const group = document.createElementNS('http://www.w3.org/2000/svg', 'g');
        group.setAttribute('transform', `translate(${offset} 0)`);
        LAND.forEach(shape => addPath(group, 'land', toPath(shape, true)));
        LAKES.forEach(shape => addPath(group, 'lake', toPath(shape, true)));
        BORDERS.forEach(line => addPath(group, 'border', toPath(line, false)));
        layer.appendChild(group);
    });
}

drawMap();
```
